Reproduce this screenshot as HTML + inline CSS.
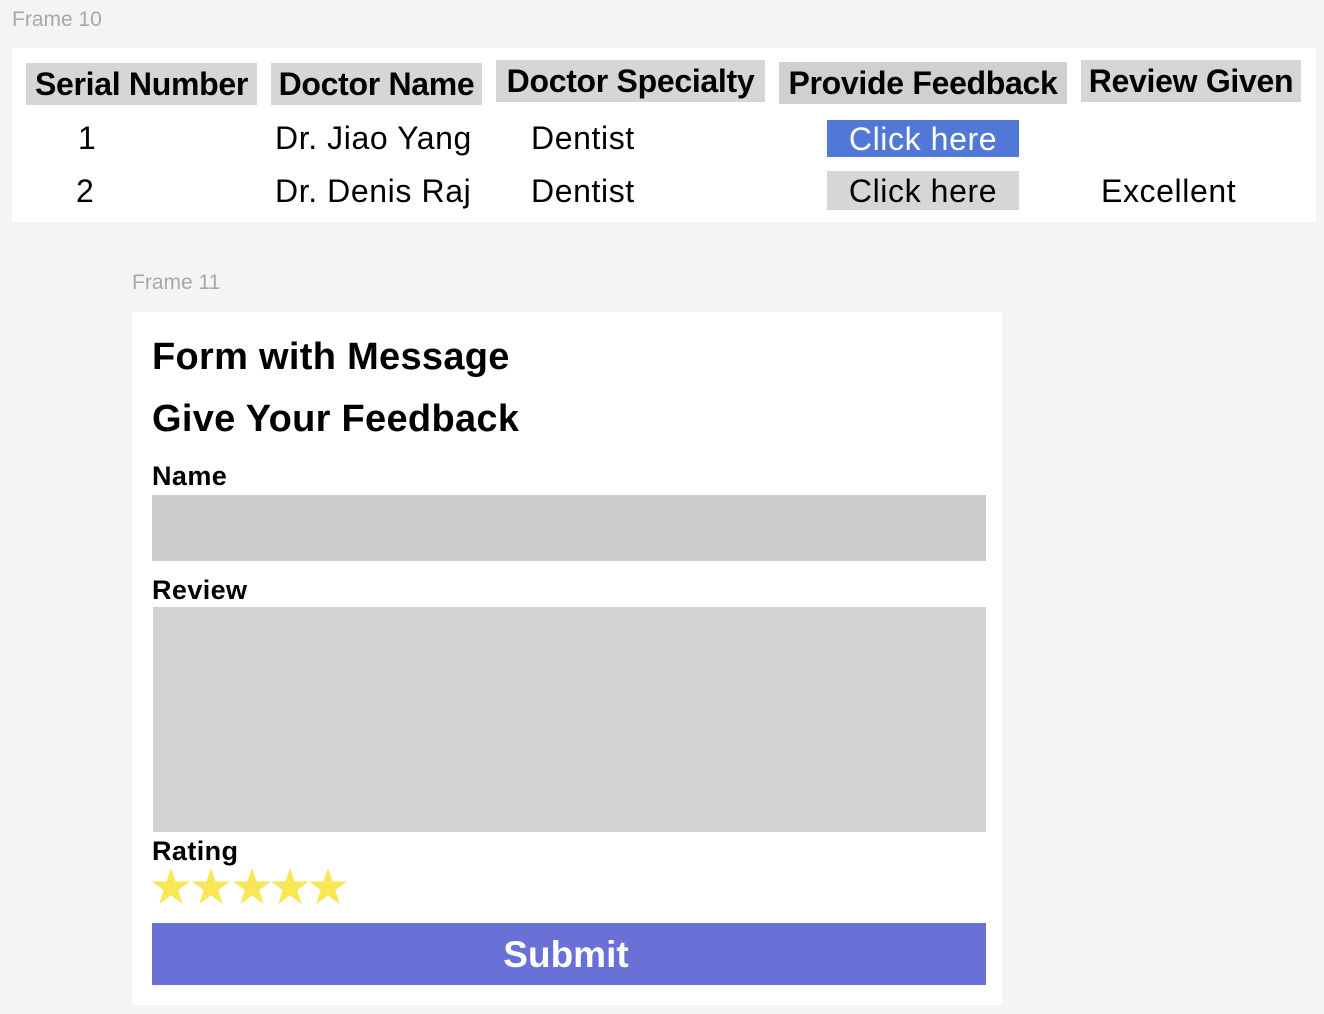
<!DOCTYPE html>
<html><head><meta charset="utf-8"><style>
*{margin:0;padding:0;box-sizing:border-box}
body{width:1324px;height:1014px;background:#f4f4f4;position:relative;overflow:hidden;font-family:"Liberation Sans",Arial,sans-serif;color:#000}
.a{position:absolute;white-space:nowrap}
.lbl{color:#a8a8a8;font-size:21px}
.h{background:#d6d6d6;font-weight:bold;font-size:32px;line-height:42px;text-align:center;letter-spacing:-0.3px}
.c{font-size:32px;line-height:40px;letter-spacing:0.6px}
.b{font-weight:bold}
.t{font-size:38px;line-height:44px;letter-spacing:0.3px}
.f{font-size:27px;line-height:34px;letter-spacing:0.4px}
.star{position:absolute;top:868px;width:38px;height:36px}
</style></head><body>
<div class="a lbl" style="left:12px;top:8px">Frame 10</div>
<div class="a" style="left:12px;top:48px;width:1304px;height:174px;background:#fff"></div>
<div class="a h" style="left:26px;top:63px;width:231px">Serial Number</div>
<div class="a h" style="left:271px;top:63px;width:211px">Doctor Name</div>
<div class="a h" style="left:496px;top:60px;width:269px">Doctor Specialty</div>
<div class="a h" style="left:779px;top:62px;width:288px;background:#d0d0d0">Provide Feedback</div>
<div class="a h" style="left:1081px;top:60px;width:220px">Review Given</div>

<div class="a c" style="left:78px;top:118px">1</div>
<div class="a c" style="left:275px;top:118px">Dr. Jiao Yang</div>
<div class="a c" style="left:531px;top:118px">Dentist</div>
<div class="a c" style="left:827px;top:120px;width:192px;height:37px;line-height:38px;background:#5178d6;color:#fff;text-align:center">Click here</div>

<div class="a c" style="left:76px;top:171px">2</div>
<div class="a c" style="left:275px;top:171px">Dr. Denis Raj</div>
<div class="a c" style="left:531px;top:171px">Dentist</div>
<div class="a c" style="left:827px;top:171px;width:192px;height:39px;background:#d6d6d6;text-align:center">Click here</div>
<div class="a c" style="left:1101px;top:171px">Excellent</div>

<div class="a lbl" style="left:132px;top:271px">Frame 11</div>
<div class="a" style="left:132px;top:312px;width:870px;height:693px;background:#fff"></div>
<div class="a b t" style="left:152px;top:335px">Form with Message</div>
<div class="a b t" style="left:152px;top:397px">Give Your Feedback</div>
<div class="a b f" style="left:152px;top:459px">Name</div>
<div class="a" style="left:152px;top:495px;width:834px;height:66px;background:#cccccc"></div>
<div class="a b f" style="left:152px;top:573px">Review</div>
<div class="a" style="left:153px;top:607px;width:833px;height:225px;background:#d3d3d3"></div>
<div class="a b f" style="left:152px;top:834px">Rating</div>
<svg class="star" style="left:152px" viewBox="0 0 38 36"><polygon fill="#f8e655" points="19,0 23.5,13.5 38,13.5 26.3,22 30.7,36 19,27.5 7.3,36 11.7,22 0,13.5 14.5,13.5"/></svg>
<svg class="star" style="left:192px" viewBox="0 0 38 36"><polygon fill="#f8e655" points="19,0 23.5,13.5 38,13.5 26.3,22 30.7,36 19,27.5 7.3,36 11.7,22 0,13.5 14.5,13.5"/></svg>
<svg class="star" style="left:233px" viewBox="0 0 38 36"><polygon fill="#f8e655" points="19,0 23.5,13.5 38,13.5 26.3,22 30.7,36 19,27.5 7.3,36 11.7,22 0,13.5 14.5,13.5"/></svg>
<svg class="star" style="left:271px" viewBox="0 0 38 36"><polygon fill="#f8e655" points="19,0 23.5,13.5 38,13.5 26.3,22 30.7,36 19,27.5 7.3,36 11.7,22 0,13.5 14.5,13.5"/></svg>
<svg class="star" style="left:309px" viewBox="0 0 38 36"><polygon fill="#f8e655" points="19,0 23.5,13.5 38,13.5 26.3,22 30.7,36 19,27.5 7.3,36 11.7,22 0,13.5 14.5,13.5"/></svg>
<div class="a b" style="left:152px;top:923px;width:834px;height:62px;background:#6971d7;color:#fff;font-size:37px;line-height:63px;text-align:center;padding-right:6px">Submit</div>
</body></html>
